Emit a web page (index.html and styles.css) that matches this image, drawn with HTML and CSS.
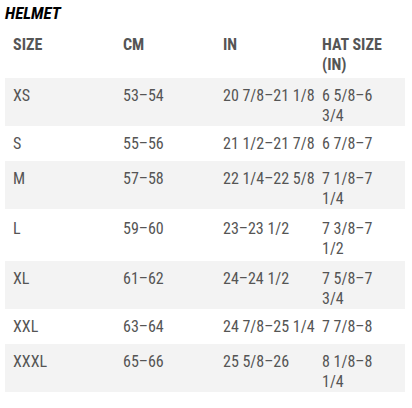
FILE: index.html
```html
<!DOCTYPE html>
<html>
<head>
<meta charset="utf-8">
<link rel="stylesheet" href="styles.css">
</head>
<body>
<div class="chart">
  <h2 class="title">HELMET</h2>
  <table class="sizes">
    <thead>
      <tr>
        <th class="c1">SIZE</th>
        <th class="c2">CM</th>
        <th class="c3">IN</th>
        <th class="c4">HAT SIZE (IN)</th>
      </tr>
    </thead>
    <tbody>
      <tr class="alt"><td>XS</td><td>53–54</td><td>20 7/8–21 1/8</td><td>6 5/8–6 3/4</td></tr>
      <tr><td>S</td><td>55–56</td><td>21 1/2–21 7/8</td><td>6 7/8–7</td></tr>
      <tr class="alt"><td>M</td><td>57–58</td><td>22 1/4–22 5/8</td><td>7 1/8–7 1/4</td></tr>
      <tr class="tall"><td>L</td><td>59–60</td><td>23–23 1/2</td><td>7 3/8–7 1/2</td></tr>
      <tr class="alt"><td>XL</td><td>61–62</td><td>24–24 1/2</td><td>7 5/8–7 3/4</td></tr>
      <tr><td>XXL</td><td>63–64</td><td>24 7/8–25 1/4</td><td>7 7/8–8</td></tr>
      <tr class="alt"><td>XXXL</td><td>65–66</td><td>25 5/8–26</td><td>8 1/8–8 1/4</td></tr>
    </tbody>
  </table>
</div>
</body>
</html>
```
FILE: styles.css
```css
html, body {
  margin: 0;
  padding: 0;
  background: #ffffff;
}
body {
  font-family: "Roboto Condensed", Roboto, "Liberation Sans", sans-serif;
  font-stretch: condensed;
  color: #555555;
}
.chart {
  padding: 3px 7px 0 5px;
}
.title {
  margin: 0;
  font-size: 17px;
  line-height: 20px;
  font-weight: 700;
  font-style: italic;
  color: #000000;
}
.sizes {
  width: 400px;
  border-collapse: collapse;
  table-layout: fixed;
  margin-top: 4px;
}
.sizes th,
.sizes td {
  box-sizing: border-box;
  text-align: left;
  vertical-align: top;
  padding: 0 0 0 8px;
  font-size: 16px;
  line-height: 20px;
}
.sizes th {
  font-weight: 700;
  color: #555555;
  padding-top: 8px;
  padding-bottom: 3px;
}
.sizes td {
  padding-top: 8px;
  padding-bottom: 0;
}
.sizes tbody tr.tall td {
  padding-top: 10px;
}
.c1 { width: 110px; }
.c2 { width: 100px; }
.c3 { width: 99px; }
.c4 { width: 91px; }
.sizes td:nth-child(3) {
  white-space: nowrap;
}
.sizes th:nth-child(4),
.sizes td:nth-child(4) {
  padding-right: 8px;
}
.sizes tbody tr {
  height: 35px;
}
.sizes tbody tr.tall {
  height: 52px;
}
.sizes tr.alt td {
  background: #f3f3f3;
}
```
